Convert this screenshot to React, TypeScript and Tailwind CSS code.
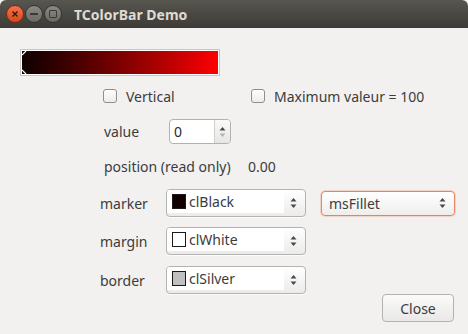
import React from 'react';

const font = { fontFamily: '"Noto Sans", "DejaVu Sans", sans-serif' };

const UpDown: React.FC<{ downDim?: boolean }> = ({ downDim }) => (
  <svg width="7" height="12" viewBox="0 0 7 12">
    <path d="M0.5 4.5 L3.5 1 L6.5 4.5 Z" fill="#4a4a4a" />
    <path d="M0.5 7.5 L3.5 11 L6.5 7.5 Z" fill={downDim ? '#b5b5b5' : '#4a4a4a'} />
  </svg>
);

const Checkbox: React.FC<{ label: string; className?: string }> = ({ label, className }) => (
  <div className={`flex items-center gap-[9px] ${className ?? ''}`}>
    <div className="w-[14px] h-[14px] rounded-[3px] border border-[#8e8e8e] bg-gradient-to-b from-white to-[#ececec]" />
    <span>{label}</span>
  </div>
);

const ColorCombo: React.FC<{ swatch: string; label: string }> = ({ swatch, label }) => (
  <div className="w-[140px] h-[28px] rounded-[4px] border border-[#b4b2ae] bg-gradient-to-b from-white to-[#ebebea] flex items-stretch shadow-[0_1px_0_rgba(255,255,255,0.8)]">
    <div className="flex items-center bg-white w-[117px] mb-[3px] pl-[5px] rounded-tl-[3px]">
      <div className="w-[14px] h-[15px] border border-[#1a1a1a]" style={{ background: swatch }} />
      <span className="ml-[3px]">{label}</span>
    </div>
    <div className="flex-1 flex items-center justify-center pr-[2px]">
      <UpDown />
    </div>
  </div>
);

export default function App() {
  return (
    <div className="w-[468px] h-[334px] bg-[#f2f1f0] text-[14px] text-[#3c3c3c] overflow-hidden" style={font}>
      {/* title bar */}
      <div className="h-[28px] rounded-t-[6px] bg-gradient-to-b from-[#57564f] to-[#3c3b37] flex items-center pl-[6px]">
        <div className="w-[18px] h-[18px] rounded-full bg-gradient-to-b from-[#f27449] to-[#d9461a] border border-[#7a2c12] flex items-center justify-center">
          <svg width="8" height="8" viewBox="0 0 8 8"><path d="M1.5 1.5 L6.5 6.5 M6.5 1.5 L1.5 6.5" stroke="#3a1509" strokeWidth="1.4" /></svg>
        </div>
        <div className="ml-[1px] w-[18px] h-[18px] rounded-full bg-gradient-to-b from-[#8b8a85] to-[#6a6964] border border-[#34332f] flex items-center justify-center">
          <div className="w-[8px] h-[2px] bg-[#3a3935]" />
        </div>
        <div className="ml-[1px] w-[18px] h-[18px] rounded-full bg-gradient-to-b from-[#8b8a85] to-[#6a6964] border border-[#34332f] flex items-center justify-center">
          <div className="w-[8px] h-[8px] border-[1.5px] border-[#3a3935] rounded-[1px]" />
        </div>
        <span className="ml-[12px] text-[14px] font-bold text-[#dfdbd2]">TColorBar Demo</span>
      </div>

      {/* color bar */}
      <div className="mt-[21px] ml-[20px] w-[200px] h-[27px] border border-[#c8c7c5] bg-white p-[1px]">
        <div className="relative w-full h-full bg-gradient-to-r from-[#100000] to-[#ff0000]">
          <svg className="absolute left-0 top-0" width="5" height="5" viewBox="0 0 5 5"><path d="M0 4 L4 0" stroke="white" strokeWidth="1.2" /></svg>
          <svg className="absolute left-0 bottom-0" width="5" height="5" viewBox="0 0 5 5"><path d="M0 1 L4 5" stroke="white" strokeWidth="1.2" /></svg>
        </div>
      </div>

      {/* checkboxes */}
      <div className="mt-[13px] h-[14px] pl-[103px] flex items-center">
        <Checkbox label="Vertical" className="w-[148px]" />
        <Checkbox label="Maximum valeur = 100" />
      </div>

      {/* value */}
      <div className="mt-[16px] h-[25px] pl-[104px] flex items-center">
        <span className="w-[65px]">value</span>
        <div className="w-[62px] h-[25px] rounded-[4px] border border-[#b4b2ae] bg-white flex">
          <div className="flex-1 flex items-center pl-[4px] text-[#2a2a2a]">0</div>
          <div className="w-[16px] border-l border-[#d0cfcc] bg-gradient-to-b from-[#fafafa] to-[#e6e6e5] rounded-r-[3px] flex items-center justify-center">
            <UpDown downDim />
          </div>
        </div>
      </div>

      {/* position */}
      <div className="mt-[13px] h-[18px] pl-[104px] flex items-center">
        <span className="w-[144px]">position (read only)</span>
        <span>0.00</span>
      </div>

      {/* marker */}
      <div className="mt-[14px] h-[28px] pl-[100px] flex items-center">
        <span className="w-[66px]">marker</span>
        <ColorCombo swatch="#100000" label="clBlack" />
        <div className="ml-[15px] w-[134px] h-[25px] rounded-[4px] border border-[#e8825f] bg-gradient-to-b from-white to-[#efeeed] flex items-center pl-[7px] pr-[8px] shadow-[0_0_0_1px_rgba(240,160,130,0.35)]">
          <span className="flex-1">msFillet</span>
          <UpDown />
        </div>
      </div>

      {/* margin */}
      <div className="mt-[10px] h-[28px] pl-[100px] flex items-center">
        <span className="w-[66px]">margin</span>
        <ColorCombo swatch="#ffffff" label="clWhite" />
      </div>

      {/* border */}
      <div className="mt-[11px] h-[28px] pl-[100px] flex items-center">
        <span className="w-[66px]">border</span>
        <ColorCombo swatch="#c0c0c0" label="clSilver" />
      </div>

      {/* close */}
      <div className="flex justify-end pr-[14px]">
        <button className="w-[72px] h-[28px] rounded-[4px] border border-[#b4b2ae] bg-gradient-to-b from-[#fbfbfb] to-[#e9e8e7] text-[#3c3c3c]">
          Close
        </button>
      </div>
    </div>
  );
}
